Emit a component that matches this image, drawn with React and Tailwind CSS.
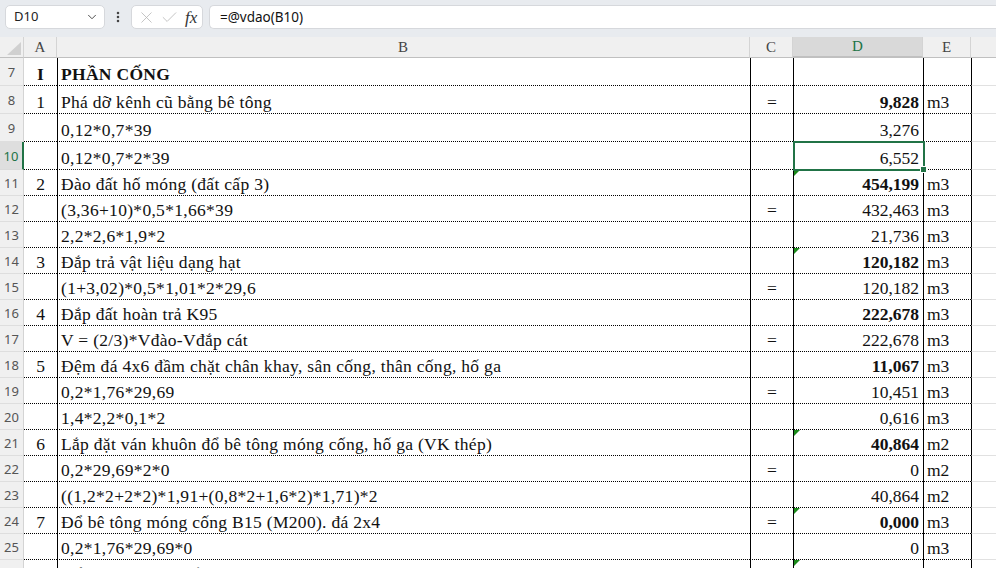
import { ChevronDown, EllipsisVertical, X, Check } from 'lucide-react';

const rows = [
  { n: 7, a: 'I', ab: true, b: 'PHẦN CỐNG', bb: true },
  { n: 8, a: '1', b: 'Phá dỡ kênh cũ bằng bê tông', c: '=', d: '9,828', db: true, e: 'm3' },
  { n: 9, b: '0,12*0,7*39', d: '3,276' },
  { n: 10, b: '0,12*0,7*2*39', d: '6,552', sel: true },
  { n: 11, a: '2', b: 'Đào đất hố móng (đất cấp 3)', d: '454,199', db: true, e: 'm3', tri: true },
  { n: 12, b: '(3,36+10)*0,5*1,66*39', c: '=', d: '432,463', e: 'm3' },
  { n: 13, b: '2,2*2,6*1,9*2', d: '21,736', e: 'm3' },
  { n: 14, a: '3', b: 'Đắp trả vật liệu dạng hạt', d: '120,182', db: true, e: 'm3', tri: true },
  { n: 15, b: '(1+3,02)*0,5*1,01*2*29,6', c: '=', d: '120,182', e: 'm3' },
  { n: 16, a: '4', b: 'Đắp đất hoàn trả K95', d: '222,678', db: true, e: 'm3' },
  { n: 17, b: 'V = (2/3)*Vđào-Vđắp cát', c: '=', d: '222,678', e: 'm3' },
  { n: 18, a: '5', b: 'Đệm đá 4x6 đầm chặt chân khay, sân cống, thân cống, hố ga', d: '11,067', db: true, e: 'm3' },
  { n: 19, b: '0,2*1,76*29,69', c: '=', d: '10,451', e: 'm3' },
  { n: 20, b: '1,4*2,2*0,1*2', d: '0,616', e: 'm3' },
  { n: 21, a: '6', b: 'Lắp đặt ván khuôn đổ bê tông móng cống, hố ga (VK thép)', d: '40,864', db: true, e: 'm2', tri: true },
  { n: 22, b: '0,2*29,69*2*0', c: '=', d: '0', e: 'm2' },
  { n: 23, b: '((1,2*2+2*2)*1,91+(0,8*2+1,6*2)*1,71)*2', d: '40,864', e: 'm2' },
  { n: 24, a: '7', b: 'Đổ bê tông móng cống B15 (M200). đá 2x4', c: '=', d: '0,000', db: true, e: 'm3', tri: true },
  { n: 25, b: '0,2*1,76*29,69*0', d: '0', e: 'm3' },
  { n: 26, a: '8', b: 'Đổ bê tông thân cống', tri: true },
];

const cell = 'flex items-end pb-px whitespace-nowrap border-b border-black [border-bottom-style:dotted]';

function Row({ r }) {
  const h = r.n <= 10 ? 'h-[28px]' : 'h-[26px]';
  return (
    <div className={`flex ${h}`}>
      {/* row number */}
      <div
        className={`w-[24px] shrink-0 flex items-center justify-center border-r border-b text-[13px] font-['Noto_Sans',sans-serif] ${
          r.sel
            ? 'bg-[#dedede] text-[#217346] border-r-2 border-r-[#217346] border-b-[#dadada]'
            : 'bg-[#f0f0f0] text-[#555] border-r-[#d4d4d4] border-b-[#dedede]'
        }`}
      >
        {r.n}
      </div>
      {/* A */}
      <div className={`w-[33px] shrink-0 justify-center overflow-hidden ${cell} ${r.ab ? 'font-bold' : ''}`}>{r.a}</div>
      {/* B */}
      <div className={`w-[693px] shrink-0 border-l pl-[3px] overflow-hidden tracking-[0.3px] ${cell} ${r.bb ? 'font-bold' : ''}`}>{r.b}</div>
      {/* C */}
      <div className={`w-[43px] shrink-0 border-l justify-center ${cell}`}>{r.c}</div>
      {/* D */}
      <div className={`relative w-[130px] shrink-0 border-l justify-end pr-[4px] ${cell} ${r.db ? 'font-bold' : ''}`}>
        {r.tri && (
          <div className="absolute left-0 top-0 w-0 h-0 border-t-[6px] border-t-[#1a8a1a] border-r-[6px] border-r-transparent" />
        )}
        {r.d}
        {r.sel && (
          <div className="absolute -left-px -top-px w-[132px] h-[30px] border-2 border-[#217346] pointer-events-none z-10">
            <div className="absolute -right-[4px] -bottom-[4px] w-[7px] h-[7px] bg-[#217346] border border-white" />
          </div>
        )}
      </div>
      {/* E */}
      <div className={`w-[48px] shrink-0 border-l pl-[3px] ${cell}`}>{r.e}</div>
      {/* F */}
      <div className="flex-1 border-l border-l-black border-b border-b-[#e1e1e1]" />
    </div>
  );
}

function Toolbar() {
  return (
    <div className="h-[37px] bg-[#e8ebef] flex items-start pt-[5px] pl-[5px] gap-[6px] font-['Noto_Sans',sans-serif]">
      <div className="w-[100px] h-[24px] bg-white border border-[#d6d8dc] rounded-[5px] flex items-center justify-between pl-[8px] pr-[5px] text-[13px] text-[#222]">
        <span>D10</span>
        <ChevronDown size={14} strokeWidth={1.6} className="text-[#444]" />
      </div>
      <div className="w-[14px] h-[24px] flex items-center justify-center text-[#444]">
        <EllipsisVertical size={14} strokeWidth={2.4} />
      </div>
      <div className="w-[72px] h-[24px] bg-white border border-[#d6d8dc] rounded-[5px] flex items-center pl-[5px] gap-[4px]">
        <X size={19} strokeWidth={1} className="text-[#b5b5b5]" />
        <Check size={19} strokeWidth={1} className="text-[#b5b5b5]" />
        <span className="font-['Liberation_Serif',serif] italic text-[17px] text-[#333] leading-none ml-[2px]">fx</span>
      </div>
      <div className="flex-1 h-[24px] bg-white border border-[#d6d8dc] border-r-0 rounded-l-[5px] flex items-center pl-[10px] text-[13.5px] text-[#111]">
        =@vdao(B10)
      </div>
    </div>
  );
}

function Header() {
  const col = 'flex items-center justify-center border-r border-[#d4d4d4] border-b border-b-[#c0c0c0] shrink-0';
  return (
    <div className="flex h-[21px] bg-[#f0f0f0] text-[15px] text-[#444] font-['Liberation_Serif',serif]">
      <div className={`w-[24px] ${col} justify-end items-end pr-[2px] pb-[2px]`}>
        <div className="w-0 h-0 border-b-[13px] border-b-[#d0d0d0] border-l-[14px] border-l-transparent" />
      </div>
      <div className={`w-[33px] ${col}`}>A</div>
      <div className={`w-[693px] ${col}`}>B</div>
      <div className={`w-[43px] ${col}`}>C</div>
      <div className={`w-[130px] ${col} bg-[#d9d9d9] text-[#217346] border-b-2 border-b-[#217346]`}>D</div>
      <div className={`w-[48px] ${col}`}>E</div>
      <div className="flex-1 border-b border-b-[#c0c0c0]" />
    </div>
  );
}

export default function App() {
  return (
    <div className="w-[996px] h-[568px] overflow-hidden bg-white">
      <Toolbar />
      <Header />
      <div className="font-['Liberation_Serif',serif] text-[17.5px] leading-[20px] text-[#111]">
        {rows.map((r) => (
          <Row key={r.n} r={r} />
        ))}
      </div>
    </div>
  );
}
